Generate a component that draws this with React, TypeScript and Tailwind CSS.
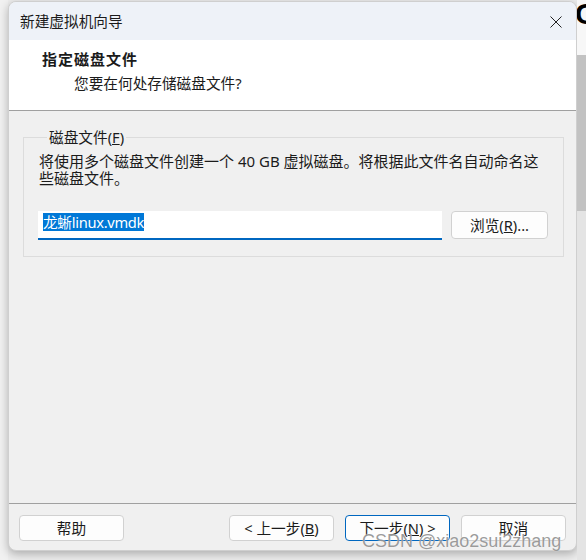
import React from 'react';

const Btn: React.FC<{ children: React.ReactNode; primary?: boolean }> = ({ children, primary }) => (
    <button
        type="button"
        className={
            primary
                ? 'h-[26px] w-[105px] rounded-[4px] border border-[#0067c0] bg-[#fdfdfd] text-[14.67px] leading-[18px] text-[#1b1b1b]'
                : 'h-[26px] w-[105px] rounded-[4px] border border-[#d1d1d1] bg-[#fdfdfd] text-[14.67px] leading-[18px] text-[#1b1b1b]'
        }
    >
        {children}
    </button>
);

export default function App() {
    return (
        <div className="relative flex w-[586px] h-[560px] overflow-hidden bg-[#ededed] font-['Noto_Sans','Noto_Sans_CJK_SC',sans-serif] text-[#1b1b1b]">
            {/* left gutter */}
            <div className="w-[8px] shrink-0 bg-[#f1f1f1]" />

            {/* wizard dialog */}
            <div className="mt-[1px] flex h-[550px] w-[569px] shrink-0 flex-col overflow-hidden rounded-[8px] border border-[#cfcfcf] bg-[#f0f0f0] shadow-[0_3px_10px_rgba(0,0,0,0.28)]">
                <div className="flex h-[38px] shrink-0 items-center justify-between bg-[#eef2f8] pl-[11px] pr-[14px]">
                    <span className="text-[14.67px] leading-[18px]">新建虚拟机向导</span>
                    <svg width="12" height="12" viewBox="0 0 12 12" className="mt-[1px]">
                        <path d="M0.5 0.5 L11.5 11.5 M11.5 0.5 L0.5 11.5" stroke="#222" strokeWidth="1" />
                    </svg>
                </div>

                <div className="h-[71px] shrink-0 border-b border-[#a0a0a0] bg-white">
                    <div className="pl-[33px] pt-[9px] text-[15px] font-bold leading-[20px] tracking-[1px]">指定磁盘文件</div>
                    <div className="mt-[4px] pl-[65px] text-[14.67px] leading-[20px]">您要在何处存储磁盘文件?</div>
                </div>

                <div className="flex-1">
                    <fieldset className="ml-[14px] mr-[13px] mt-[17px] border border-[#dcdcdc] px-[15px] pb-[16px]">
                        <legend className="ml-[8px] px-[2px] text-[14.67px] leading-[18px]">
                            磁盘文件(<span className="underline">F</span>)
                        </legend>
                        <p className="mt-[7px] whitespace-nowrap text-[15px] leading-[17px]">
                            将使用多个磁盘文件创建一个 40 GB 虚拟磁盘。将根据此文件名自动命名这
                            <br />
                            些磁盘文件。
                        </p>
                        <div className="mt-[24px] flex items-start gap-[9px]">
                            <div className="-ml-[1px] flex h-[29px] w-[404px] items-start border-b-2 border-[#0067c0] bg-white pl-[5px] pt-[2px]">
                                <span className="bg-[#0078d7] text-[14.67px] leading-[18px] tracking-[-0.3px] text-white">龙蜥linux.vmdk</span>
                            </div>
                            <button
                                type="button"
                                className="h-[28px] w-[97px] rounded-[4px] border border-[#d1d1d1] bg-[#fdfdfd] text-[14.67px] leading-[18px]"
                            >
                                浏览(<span className="underline">R</span>)...
                            </button>
                        </div>
                    </fieldset>
                </div>

                <div className="flex h-[47px] shrink-0 items-start border-t border-[#a0a0a0] px-[10px] pt-[11px]">
                    <Btn>帮助</Btn>
                    <div className="flex-1" />
                    <div className="flex gap-[11px]">
                        <Btn>&lt; 上一步(<span className="underline">B</span>)</Btn>
                        <Btn primary>下一步(<span className="underline">N</span>) &gt;</Btn>
                        <Btn>取消</Btn>
                    </div>
                </div>
            </div>

            {/* desktop behind, right edge */}
            <div className="flex w-[9px] shrink-0 flex-col overflow-hidden">
                <div className="h-[55px] shrink-0 overflow-hidden bg-[#f7f7f7]">
                    <span className="-ml-[2px] block text-[30px] font-bold leading-[28px] text-black font-['Liberation_Sans',sans-serif]">C</span>
                </div>
                <div className="h-[156px] shrink-0 bg-[#c2c2c2]" />
                <div className="flex-1 bg-[#e4e4e4]" />
            </div>

            {/* watermark */}
            <div className="pointer-events-none absolute left-[362px] top-[531px] font-['Liberation_Sans',sans-serif] text-[18px] leading-[20px] text-[#7a7a7a]/75 [text-shadow:0_0_1px_rgba(255,255,255,0.9)]">
                CSDN @xiao2sui2zhang
            </div>
        </div>
    );
}
